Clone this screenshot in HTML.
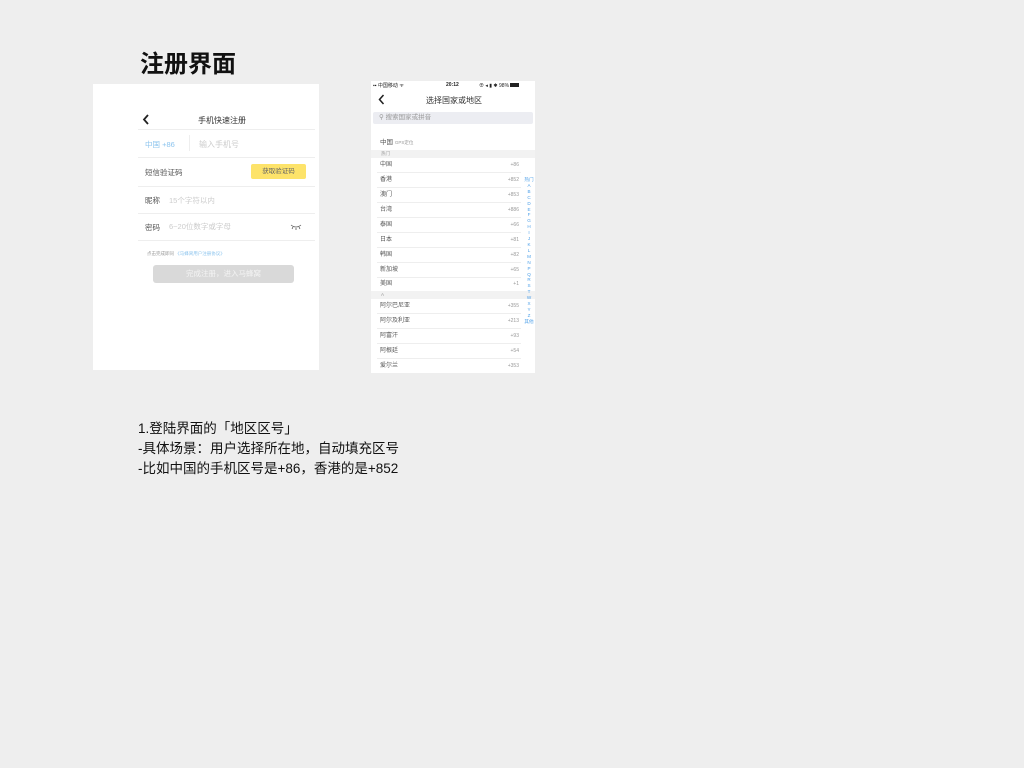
<!DOCTYPE html>
<html><head><meta charset="utf-8"><style>
*{margin:0;padding:0;box-sizing:border-box}
body{width:1024px;height:768px;background:#eeeeee;position:relative;overflow:hidden;font-family:"Liberation Sans","Noto Sans CJK SC",sans-serif}
.a{position:absolute;white-space:nowrap}
.p{position:absolute;background:#fff}
.ln{position:absolute;height:1px;background:#eee}
.s{font-size:7px;color:#555}
</style></head><body>
<div class="a" style="left:140px;top:44px;font-size:24px;font-weight:bold;color:#111">注册界面</div>

<div class="p" style="left:93px;top:84px;width:226px;height:286px"></div>
<svg class="a" style="left:142px;top:114px" width="8" height="11"><path d="M6 1 L2 5.5 L6 10" stroke="#222" stroke-width="1.8" fill="none"/></svg>
<div class="a" style="left:198px;top:115px;font-size:8px;color:#333">手机快速注册</div>
<div class="ln" style="left:138px;top:129px;width:177px"></div>
<div class="a" style="left:145px;top:139px;font-size:7.5px;color:#8cc4ee">中国 +86</div>
<div class="a" style="left:189px;top:135px;width:1px;height:16px;background:#eee"></div>
<div class="a" style="left:199px;top:139px;font-size:8px;color:#ccc">输入手机号</div>
<div class="ln" style="left:138px;top:157px;width:177px"></div>
<div class="a s" style="left:145px;top:167px;font-size:7.5px">短信验证码</div>
<div class="a" style="left:251px;top:164px;width:55px;height:15px;background:#fde36a;border-radius:2px;font-size:6.5px;color:#666;text-align:center;line-height:15px">获取验证码</div>
<div class="ln" style="left:138px;top:186px;width:177px"></div>
<div class="a s" style="left:145px;top:195px;font-size:7.5px">昵称</div>
<div class="a" style="left:169px;top:195px;font-size:7.5px;color:#ccc">15个字符以内</div>
<div class="ln" style="left:138px;top:213px;width:177px"></div>
<div class="a s" style="left:145px;top:222px;font-size:7.5px">密码</div>
<div class="a" style="left:169px;top:221px;font-size:7.5px;color:#ccc">6~20位数字或字母</div>
<svg class="a" style="left:290px;top:224px" width="12" height="6"><path d="M1 1 Q6 5 11 1 M3 3 L2 5 M6 4 L6 6 M9 3 L10 5" stroke="#555" stroke-width="0.8" fill="none"/></svg>
<div class="ln" style="left:138px;top:240px;width:177px"></div>
<div class="a" style="left:147px;top:251px;font-size:4.5px;color:#999">点击完成即同 <span style="color:#8cc4ee">《马蜂窝用户注册协议》</span></div>
<div class="a" style="left:153px;top:265px;width:141px;height:18px;background:#d9d9d9;border-radius:3px;color:#f4f4f4;font-size:7.5px;text-align:center;line-height:18px">完成注册，进入马蜂窝</div>

<div class="p" style="left:371px;top:81px;width:164px;height:292px"></div>
<div class="a" style="left:373px;top:82px;font-size:5px;color:#222">▪▪ 中国移动 ᯤ</div>
<div class="a" style="left:446px;top:82px;font-size:5px;color:#222;font-weight:bold">20:12</div>
<div class="a" style="left:479px;top:82px;font-size:5px;color:#222">⊕ ◂ ▮ ✱ 98% <span style="display:inline-block;width:9px;height:4px;background:#222"></span></div>
<svg class="a" style="left:378px;top:94px" width="7" height="11"><path d="M5.5 1 L1.5 5.5 L5.5 10" stroke="#222" stroke-width="1.5" fill="none"/></svg>
<div class="a" style="left:426px;top:95px;font-size:8px;color:#333">选择国家或地区</div>
<div class="a" style="left:373px;top:112px;width:160px;height:12px;background:#ecedf2;border-radius:2px;font-size:6.5px;color:#999;padding-left:6px;line-height:12px">⚲ 搜索国家或拼音</div>
<div class="a" style="left:380px;top:136px;font-size:6.5px;color:#555">中国 <span style="font-size:4.5px;color:#999">GPS定位</span></div>
<div class="a" style="left:371px;top:150px;width:164px;height:8px;background:#f2f2f2;font-size:4.5px;color:#999;padding-left:10px;line-height:8px">热门</div>
<div class="a" style="left:371px;top:291px;width:164px;height:8px;background:#f2f2f2;font-size:4.5px;color:#999;padding-left:10px;line-height:8px">A</div>
<div id="L"></div>
<div class="a" style="left:524px;top:177px;width:10px;font-size:4.6px;line-height:5.9px;color:#4a9ee8;text-align:center;white-space:normal">热门<br>A<br>B<br>C<br>D<br>E<br>F<br>G<br>H<br>I<br>J<br>K<br>L<br>M<br>N<br>P<br>Q<br>R<br>S<br>T<br>W<br>X<br>Y<br>Z<br>其他</div>

<div class="a" style="left:138px;top:419px;font-size:13.5px;line-height:20px;color:#111">1.登陆界面的「地区区号」<br>-具体场景：用户选择所在地，自动填充区号<br>-比如中国的手机区号是+86，香港的是+852</div>
<script>
var d=[["中国","+86",165],["香港","+852",180],["澳门","+853",195],["台湾","+886",210],["泰国","+66",225],["日本","+81",240],["韩国","+82",255],["新加坡","+65",270],["美国","+1",284],["阿尔巴尼亚","+355",306],["阿尔及利亚","+213",321],["阿富汗","+93",336],["阿根廷","+54",351],["爱尔兰","+353",366]];
var h="";d.forEach(function(r,i){h+='<div class="a" style="left:380px;top:'+(r[2]-5)+'px;font-size:6px;line-height:10px;color:#555">'+r[0]+'</div><div class="a" style="left:490px;width:29px;text-align:right;top:'+(r[2]-5)+'px;font-size:5px;line-height:10px;color:#999">'+r[1]+'</div>';if(i!=8&&i!=13)h+='<div class="ln" style="left:377px;top:'+(r[2]+7)+'px;width:144px"></div>';});
document.getElementById("L").innerHTML=h;
</script>
</body></html>
